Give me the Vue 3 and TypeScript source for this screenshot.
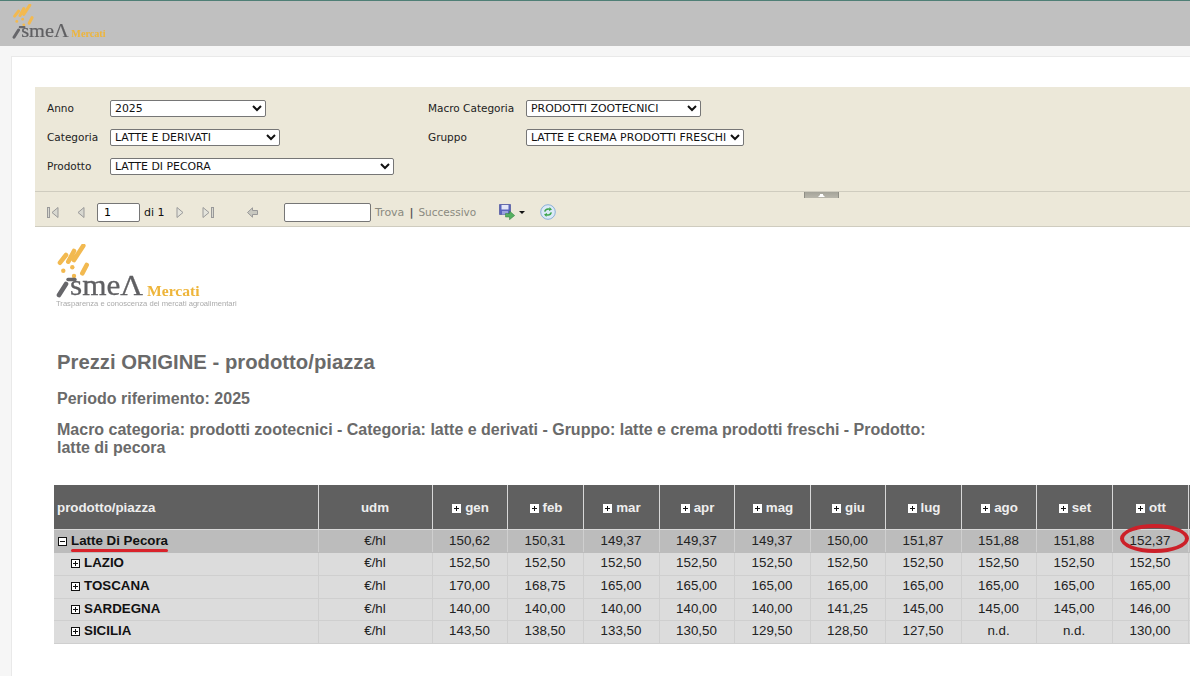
<script setup lang="ts">
interface Row { name: string; values: string[] }
const months: string[] = ['gen','feb','mar','apr','mag','giu','lug','ago','set','ott']
const total: Row = { name: 'Latte Di Pecora', values: ['150,62','150,31','149,37','149,37','149,37','150,00','151,87','151,88','151,88','152,37'] }
const rows: Row[] = [
  { name: 'LAZIO', values: Array(10).fill('152,50') },
  { name: 'TOSCANA', values: ['170,00','168,75','165,00','165,00','165,00','165,00','165,00','165,00','165,00','165,00'] },
  { name: 'SARDEGNA', values: ['140,00','140,00','140,00','140,00','140,00','141,25','145,00','145,00','145,00','146,00'] },
  { name: 'SICILIA', values: ['143,50','138,50','133,50','130,50','129,50','128,50','127,50','n.d.','n.d.','130,00'] },
]
</script>

<template>
  <div class="page">
    <header class="topbar">
      <svg class="logo-small" width="118" height="43" viewBox="0 0 181 66">
        <g stroke="#f2b950" stroke-width="4.6" stroke-linecap="round" fill="none">
          <path d="M4 18.7L10 11M12.3 17.7L18 7M18 16L27.3 1.7M26.3 29.3L30.7 21" />
        </g>
        <g fill="#f2b950"><circle cx="7.3" cy="26.7" r="2.2" /><circle cx="16.3" cy="23.3" r="2.2" /><circle cx="18" cy="32" r="2.2" /></g>
        <path d="M3 51L10 40" stroke="#66666a" stroke-width="4.6" stroke-linecap="round" />
        <path d="M12 35.5H19" stroke="#66666a" stroke-width="3.4" stroke-linecap="round" />
        <text x="14" y="51" font-family="Liberation Serif" font-size="30" fill="#5f5f62" stroke="#5f5f62" stroke-width="0.3" textLength="73" lengthAdjust="spacingAndGlyphs">smeΛ</text>
        <text x="91" y="51" font-family="Liberation Serif" font-weight="700" font-size="15.6" fill="#eeb53a">Mercati</text>
      </svg>
    </header>

    <main class="panel">
      <section class="viewer">
        <form class="params">
          <div class="col-left">
            <div class="field"><label>Anno</label><select class="s-anno"><option>2025</option></select></div>
            <div class="field"><label>Categoria</label><select class="s-cat"><option>LATTE E DERIVATI</option></select></div>
            <div class="field"><label>Prodotto</label><select class="s-prod"><option>LATTE DI PECORA</option></select></div>
          </div>
          <div class="col-right">
            <div class="field"><label>Macro Categoria</label><select class="s-macro"><option>PRODOTTI ZOOTECNICI</option></select></div>
            <div class="field"><label>Gruppo</label><select class="s-gruppo"><option>LATTE E CREMA PRODOTTI FRESCHI</option></select></div>
          </div>
        </form>

        <div class="toolbar">
          <span class="grip"><svg width="7" height="3" viewBox="0 0 7 3"><path d="M0 3L2 1V0H5V1L7 3Z" fill="#fff" /></svg></span>
          <svg class="i-first" width="12" height="13" viewBox="0 0 12 13"><rect x="0.5" y="1.5" width="2" height="10" fill="#d8d8d0" stroke="#999" /><path d="M11 1.5V11.5L5 6.5Z" fill="#d8d8d0" stroke="#999" /></svg>
          <svg class="i-prev" width="8" height="13" viewBox="0 0 8 13"><path d="M7 1.5V11.5L1 6.5Z" fill="#d8d8d0" stroke="#999" /></svg>
          <input class="page-input" value="1" />
          <span class="ofpages">di 1</span>
          <svg class="i-next" width="8" height="13" viewBox="0 0 8 13"><path d="M1 1.5V11.5L7 6.5Z" fill="#e4e4dc" stroke="#999" /></svg>
          <svg class="i-last" width="12" height="13" viewBox="0 0 12 13"><path d="M1 1.5V11.5L7 6.5Z" fill="#e4e4dc" stroke="#999" /><rect x="9.5" y="1.5" width="2" height="10" fill="#d8d8d0" stroke="#999" /></svg>
          <svg class="i-back" width="11" height="11" viewBox="0 0 11 11"><path d="M0.5 5.5L5.5 0.8V3.5H10.5V7.5H5.5V10.2Z" fill="#c8c8c0" stroke="#999" /></svg>
          <input class="find-input" />
          <a class="tool-link find">Trova</a>
          <span class="sep">|</span>
          <a class="tool-link next">Successivo</a>
          <svg class="i-save" width="16" height="16" viewBox="0 0 16 16">
            <path d="M0.5 0.5H11.5V10.5H0.5Z" fill="#5a64bd" stroke="#3c4596" stroke-width="0.6" />
            <rect x="2.5" y="1" width="7" height="4.5" fill="#e4e7f7" />
            <rect x="3" y="7" width="6" height="3.5" fill="#9aa2de" />
            <path d="M6.5 9.5H10.5V7L15.7 11.5L10.5 15.7V13H6.5Z" fill="#55b060" stroke="#2e7d3a" stroke-width="0.5" />
          </svg>
          <svg class="i-caret" width="6" height="3" viewBox="0 0 6 3"><path d="M0 0H6L3 3Z" fill="#111" /></svg>
          <svg class="i-refresh" width="16" height="16" viewBox="0 0 16 16">
            <circle cx="8" cy="8" r="7.3" fill="#dbe9f7" stroke="#8ab0d8" />
            <path d="M4 7.5C4.5 5 7 3.5 9.5 4.5V3L12 5.5L9 7V5.8C7.5 5.5 6 6.2 5.5 7.8Z" fill="#3da54a" />
            <path d="M12 8.5C11.5 11 9 12.5 6.5 11.5V13L4 10.5L7 9V10.2C8.5 10.5 10 9.8 10.5 8.2Z" fill="#3da54a" />
          </svg>
        </div>

        <div class="report">
          <svg class="logo-big" width="181" height="66" viewBox="0 0 181 66">
            <g stroke="#f2b950" stroke-width="4.6" stroke-linecap="round" fill="none">
              <path d="M4 18.7L10 11M12.3 17.7L18 7M18 16L27.3 1.7M26.3 29.3L30.7 21" />
            </g>
            <g fill="#f2b950"><circle cx="7.3" cy="26.7" r="2.2" /><circle cx="16.3" cy="23.3" r="2.2" /><circle cx="18" cy="32" r="2.2" /></g>
            <path d="M3 51L10 40" stroke="#66666a" stroke-width="4.6" stroke-linecap="round" />
            <path d="M12 35.5H19" stroke="#66666a" stroke-width="3.4" stroke-linecap="round" />
            <text x="14" y="51" font-family="Liberation Serif" font-size="30" fill="#5f5f62" stroke="#5f5f62" stroke-width="0.3" textLength="73" lengthAdjust="spacingAndGlyphs">smeΛ</text>
            <text x="91" y="52" font-family="Liberation Serif" font-weight="700" font-size="15.6" fill="#eeb53a">Mercati</text>
            <text x="0" y="62" font-family="Liberation Sans" font-size="7.6" fill="#aaa">Trasparenza e conoscenza dei mercati agroalimentari</text>
          </svg>
          <h1>Prezzi ORIGINE - prodotto/piazza</h1>
          <h2 class="period">Periodo riferimento: 2025</h2>
          <h2 class="filters">Macro categoria: prodotti zootecnici - Categoria: latte e derivati - Gruppo: latte e crema prodotti freschi - Prodotto: latte di pecora</h2>

          <div class="table-wrap">
            <table>
              <colgroup>
                <col style="width:264px" /><col style="width:114px" />
                <col style="width:75px" /><col style="width:76px" /><col style="width:76px" /><col style="width:75px" /><col style="width:76px" />
                <col style="width:75px" /><col style="width:76px" /><col style="width:75px" /><col style="width:76px" /><col style="width:76px" />
                <col style="width:76px" />
              </colgroup>
              <thead>
                <tr>
                  <th class="first">prodotto/piazza</th>
                  <th>udm</th>
                  <th v-for="m in months" :key="m" class="month"><span class="box light"></span>{{ m }}</th>
                  <th></th>
                </tr>
              </thead>
              <tbody>
                <tr class="total">
                  <td class="first"><span class="box minus"></span>{{ total.name }}</td>
                  <td>€/hl</td>
                  <td v-for="(v, i) in total.values" :key="i">{{ v }}</td>
                  <td></td>
                </tr>
                <tr v-for="r in rows" :key="r.name" class="piazza">
                  <td class="first child"><span class="box"></span>{{ r.name }}</td>
                  <td>€/hl</td>
                  <td v-for="(v, i) in r.values" :key="i">{{ v }}</td>
                  <td></td>
                </tr>
              </tbody>
            </table>
            <span class="mark-line"></span>
            <span class="mark-ring"></span>
          </div>
        </div>
      </section>
    </main>
  </div>
</template>

<style>
html, body { margin: 0; overflow: hidden; background: #f6f6f6; }
</style>

<style scoped>
.page { width: 1190px; height: 676px; overflow: hidden; font-family: "DejaVu Sans", sans-serif; }
.topbar { height: 45px; background: #c0c0c0; border-top: 1px solid #4f7f76; }
.logo-small { display: block; margin: 3px 0 0 12px; filter: blur(0.35px); }
.panel { margin: 10px 0 0 11px; padding: 30px 0 0 23px; background: #fff; border: 1px solid #e9e9e9; border-right: 0; width: 1400px; height: 640px; box-sizing: border-box; }
.viewer { width: 1400px; }
.params { display: flex; height: 105px; box-sizing: border-box; padding: 13px 0 0 12px; background: #ece8d9; border-bottom: 1px solid #cfccbf; }
.col-left { width: 381px; }
.field { display: flex; align-items: center; height: 17px; margin-bottom: 12px; font-size: 10.5px; color: #222; }
.field label { width: 63px; padding-bottom: 2px; }
.col-right .field label { width: 98px; }
select { height: 17px; box-sizing: border-box; font: 10.9px "DejaVu Sans", sans-serif; color: #111; background: #fff; border: 1px solid #767676; border-radius: 2px; padding: 0; }
.s-anno { width: 156px; }
.s-cat { width: 170px; }
.s-prod { width: 284px; }
.s-macro { width: 175px; }
.s-gruppo { width: 218px; }

.toolbar { position: relative; display: flex; align-items: center; height: 35px; box-sizing: border-box; background: #ece8d9; border-bottom: 1px solid #cfccbf; padding: 6px 0 0 12px; font-size: 11px; color: #111; }
.grip { position: absolute; left: 769px; top: 0; width: 35px; height: 6px; display: flex; justify-content: center; align-items: center; background: linear-gradient(#a4a399, #b8b6ab); border-left: 1px solid #8f8e85; border-right: 1px solid #8f8e85; box-sizing: border-box; }
.toolbar svg { flex: none; }
.toolbar input { box-sizing: border-box; height: 19px; border: 1px solid #767676; border-radius: 2px; background: #fff; font: 11px "DejaVu Sans", sans-serif; padding: 1px 6px; }
.i-prev { margin-left: 18px; }
.page-input { width: 43px; margin-left: 12px; }
.ofpages { margin-left: 4px; white-space: nowrap; width: 21px; }
.i-next { margin-left: 11px; }
.i-last { margin-left: 18px; }
.i-back { margin-left: 33px; }
.find-input { width: 87px; margin-left: 26px; }
.tool-link { color: #8a8a80; }
.find { margin-left: 4px; }
.sep { margin: 0 5px; color: #555; font-weight: 700; }
.next { font-size: 10.5px; }
.i-save { margin-left: 23px; }
.i-caret { margin-left: 4px; }
.i-refresh { margin-left: 15px; }

.report { padding: 17px 0 0 21px; color: #6a6a6a; font-family: "Liberation Sans", sans-serif; }
.logo-big { display: block; filter: blur(0.25px); }
h1, h2 { margin: 0; padding-left: 1px; font-weight: 700; }
h1 { margin-top: 41px; font-size: 20.3px; line-height: 22px; }
h2 { font-size: 16px; line-height: 18px; }
.period { margin-top: 17px; }
.filters { margin-top: 13px; width: 900px; }
.table-wrap { position: relative; margin: 28px 0 0 -2px; width: 1300px; }
table { border-collapse: collapse; table-layout: fixed; width: 1210px; font-size: 13.33px; color: #222; }
th { height: 44px; padding: 0; background: #606060; color: #eee; text-align: center; font-weight: 700; border-right: 1px solid #d8d8d8; border-bottom: 1px solid #d8d8d8; }
th.first { text-align: left; padding-left: 3px; }
th.month { padding-left: 2px; }
td { height: 20px; padding: 0 0 2px; text-align: center; background: #dcdcdc; border-right: 1px solid #cfcfcf; border-bottom: 1px solid #cfcfcf; }
td.first { text-align: left; padding-left: 4px; font-weight: 700; color: #111; }
td.child { padding-left: 17px; }
.total td { background: #bcbcbc; border-bottom-color: #bcbcbc; }
.piazza td { height: 19px; padding-bottom: 3px; }
.piazza:nth-child(4) td { height: 18px; }
.box { display: inline-block; position: relative; width: 9px; height: 9px; box-sizing: border-box; margin-right: 4px; border: 1px solid #111; background: #fff; vertical-align: -1px; }
.box::before { content: ""; position: absolute; left: 1px; top: 3px; width: 5px; height: 1px; background: #111; }
.box:not(.minus)::after { content: ""; position: absolute; left: 3px; top: 1px; width: 1px; height: 5px; background: #111; }
.box.light { border-color: #fff; }
.mark-line { position: absolute; left: 17px; top: 64px; width: 97px; height: 3px; background: #d9232b; border-radius: 2px; }
.mark-ring { position: absolute; left: 1066px; top: 39px; width: 69px; height: 29px; box-sizing: border-box; border: 4px solid #cc2029; border-radius: 50%; }
</style>
